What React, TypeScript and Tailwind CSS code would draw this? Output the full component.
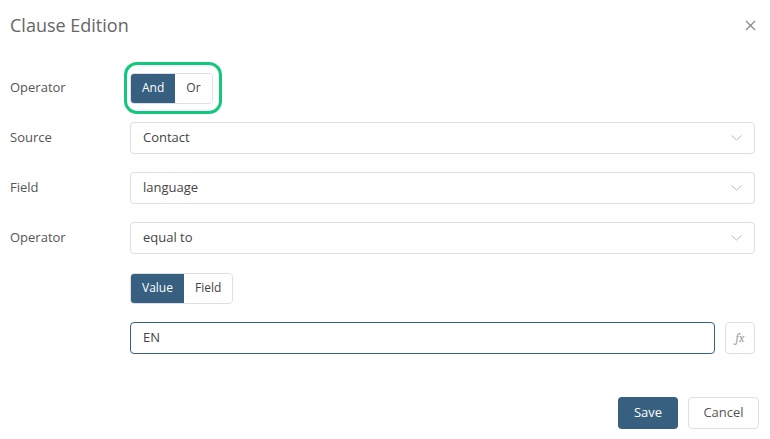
import React from 'react'

const BLUE = 'bg-[#365f80]'

function Chevron() {
  return (
    <svg width="11" height="6" viewBox="0 0 11 6" fill="none" className="text-[#b4b8c0]">
      <path d="M0.5 0.5 L5.5 5 L10.5 0.5" stroke="currentColor" strokeWidth="1" />
    </svg>
  )
}

function Select({ value }: { value: string }) {
  return (
    <div className="flex h-[32px] flex-1 items-center justify-between rounded-[4px] border border-[#dcdfe6] pl-[12px] pr-[12px] text-[13px] text-[#444]">
      <span>{value}</span>
      <Chevron />
    </div>
  )
}

function Toggle({ options, active }: { options: string[]; active: number }) {
  return (
    <div className="flex h-[31px] overflow-hidden rounded-[4px] border border-[#dcdfe6] text-[12px]">
      {options.map((o, i) => (
        <span
          key={o}
          className={`flex items-center px-[11px] ${
            i === active ? `${BLUE} text-white` : 'bg-white text-[#444]'
          }`}
        >
          {o}
        </span>
      ))}
    </div>
  )
}

function Row({ label, children }: { label?: string; children: React.ReactNode }) {
  return (
    <div className="flex h-[50px] items-center">
      <div className="w-[120px] text-[13px] text-[#555]">{label}</div>
      <div className="flex flex-1 items-center">{children}</div>
    </div>
  )
}

export default function App() {
  return (
    <div
      className="h-[439px] w-[770px] bg-white"
      style={{ fontFamily: '"Open Sans", "Liberation Sans", sans-serif' }}
    >
      <div className="flex h-[50px] items-center justify-between pl-[10px] pr-[14px]">
        <h2 className="text-[18px] text-[#666]">Clause Edition</h2>
        <svg width="11" height="11" viewBox="0 0 11 11" className="text-[#8a8a8a]">
          <path d="M1 1 L10 10 M10 1 L1 10" stroke="currentColor" strokeWidth="1.3" />
        </svg>
      </div>

      <div className="pt-[13px] pl-[10px] pr-[15px]">
        <Row label="Operator">
          <div className="relative">
            <Toggle options={['And', 'Or']} active={0} />
            <div className="pointer-events-none absolute -bottom-[10px] -left-[6px] -right-[9px] -top-[11px] rounded-[13px] border-[3px] border-[#12c97b]" />
          </div>
        </Row>
        <Row label="Source">
          <Select value="Contact" />
        </Row>
        <Row label="Field">
          <Select value="language" />
        </Row>
        <Row label="Operator">
          <Select value="equal to" />
        </Row>
        <Row>
          <Toggle options={['Value', 'Field']} active={0} />
        </Row>
        <Row>
          <div className="flex flex-1 gap-[10px]">
            <div className="flex h-[32px] flex-1 items-center rounded-[4px] border border-[#365f80] pl-[12px] text-[13px] text-[#444]">
              EN
            </div>
            <div className="flex h-[32px] w-[30px] items-center justify-center rounded-[4px] border border-[#dcdfe6] font-serif text-[12px] italic text-[#999]">
              fx
            </div>
          </div>
        </Row>
      </div>

      <div className="mt-[34px] flex justify-end gap-[10px] pr-[11px]">
        <button className={`h-[32px] w-[60px] rounded-[4px] ${BLUE} text-[13px] text-white`}>Save</button>
        <button className="h-[32px] w-[71px] rounded-[4px] border border-[#dcdfe6] bg-white text-[13px] text-[#555]">
          Cancel
        </button>
      </div>
    </div>
  )
}
